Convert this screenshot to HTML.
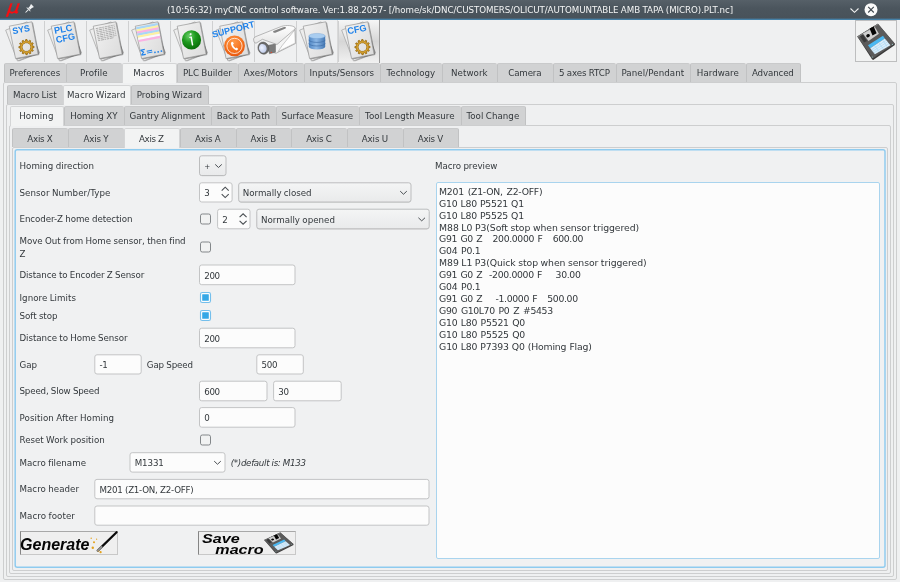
<!DOCTYPE html>
<html>
<head>
<meta charset="utf-8">
<title>myCNC control software</title>
<style>
*{box-sizing:border-box;margin:0;padding:0}
html,body{width:900px;height:582px;overflow:hidden;background:#eff0f1}
body{position:relative;font-family:"DejaVu Sans","Liberation Sans",sans-serif;font-size:8.7px;color:#33383c;line-height:12px}
.abs{position:absolute}
#root{position:absolute;left:0;top:0;width:900px;height:582px;will-change:transform}
#title{position:absolute;left:0;top:0;width:900px;height:20px;background:linear-gradient(#566068,#4b555d 45%,#48525a);border-bottom:1px solid #4581a8;box-shadow:inset 0 -1px 0 rgba(74,140,185,.3);color:#f4f5f5}
#title .t{position:absolute;left:0;width:900px;top:3.5px;text-align:center;font-size:8.7px;line-height:12px;white-space:pre}
/* toolbar */
.tb{position:absolute;top:20px;height:43px;width:42px}
.sep{position:absolute;top:21px;height:41px;width:1px;background:#cfd0d1}
/* tabs */
.tab{position:absolute;height:19px;background:#d1d2d3;border:1px solid #c1c2c3;border-top-color:#c9cacb;border-right:none;border-bottom:none;padding-top:1px;border-radius:2px 2px 0 0;text-align:center;text-indent:-1.3px;line-height:17.5px;white-space:nowrap;overflow:hidden}
.tab.sel{background:#f2f3f3;border-color:#d4d5d6;border-right:1px solid #d4d5d6;height:20px;z-index:3}
.tab.last{border-right:1px solid #c1c2c3}
.pane{position:absolute;border:1px solid #cdcecf;border-radius:2px;background:#eff0f1}
.lbl{position:absolute;white-space:nowrap;line-height:12px}
.inp{position:absolute;background:#fcfcfc;border:1px solid #c5c6c7;border-radius:2.5px;line-height:12px;white-space:pre}
.inp span{position:absolute;left:4.2px;top:50%;margin-top:-5.2px}
.cmb{position:absolute;background:linear-gradient(#f3f4f4,#eaebec);border:1px solid #bfc0c1;border-radius:2.5px;box-shadow:0 1px 0 rgba(0,0,0,.08)}
.cmb span{position:absolute;left:3.6px;top:50%;margin-top:-5.2px;white-space:pre}
.chk{position:absolute;width:11px;height:11px;border:1px solid #83878a;border-radius:2px;background:#f1f2f2}
.chk.on{border-color:#79c1ec;background:#fbfcfd;box-shadow:0 0 0 .4px rgba(121,193,236,.5)}
.chk.on:after{content:"";position:absolute;left:1.2px;top:1.2px;width:6.6px;height:6.6px;background:#35a7e6;border-radius:.5px}
svg{position:absolute;overflow:visible}
i{font-style:inherit}
.pbtn{position:absolute;background:#efefef;border:1px solid #c8c8c8;border-left:1px solid #858585;border-top-color:#a8a8a8}
.bi{font-family:'Liberation Sans',sans-serif;font-weight:bold;font-style:italic;color:#050505;white-space:nowrap}
.frame{position:absolute;border:1px solid #8fcbee;border-radius:2px;box-shadow:0 0 0 .5px rgba(143,203,238,.45)}
.ta{position:absolute;background:#fcfcfc;border:1px solid #a9d4ee;border-radius:2px}
.ta pre{position:absolute;left:2.6px;top:3.3px;font-family:inherit;font-size:9.3px;line-height:11.92px;white-space:pre}
</style>
</head>
<body>
<div id="root">
<div id="title"><div class="t"><i style="letter-spacing:-0.067px;word-spacing:-0.261px">(10:56:32) myCNC control software. Ver:1.88.2057- [/home/sk/DNC/CUSTOMERS/OLICUT/AUTOMUNTABLE AMB TAPA (MICRO).PLT.nc]</i></div>
<div class="abs" style="left:5.6px;top:-4.9px;font-family:'DejaVu Sans','Liberation Sans',sans-serif;font-style:italic;font-size:17.6px;line-height:24px;color:#fb0d10;transform:scaleX(1.12) skewX(-6deg);transform-origin:0 100%;-webkit-text-stroke:.35px #fb0d10">μ</div>
<svg style="left:24.3px;top:5.4px" width="9" height="9" viewBox="0 0 10 10"><g transform="rotate(45 5 5)" fill="#f1f3f4"><rect x="2.9" y="-1.3" width="4.2" height="1.7" rx=".3"/><rect x="3.5" y="0" width="3" height="3.6"/><path d="M1.6 5.3 Q5 2.2 8.4 5.3 Z"/><rect x="4.5" y="5.1" width="1" height="4.6"/></g></svg>
<svg style="left:849.5px;top:7.5px" width="9" height="5" viewBox="0 0 9 5"><path d="M.5 .5 L4.5 4.3 L8.5 .5" fill="none" stroke="#f2f3f3" stroke-width="1.05"/></svg>
<svg style="left:863.5px;top:3px" width="14" height="14" viewBox="0 0 14 14"><circle cx="7" cy="6.7" r="6.5" fill="#fafafa"/><path d="M4.2 3.9 L9.8 9.5 M9.8 3.9 L4.2 9.5" stroke="#40484f" stroke-width="1.1" fill="none"/></svg>
</div>
<div class="abs" style="left:337px;top:20px;width:42.5px;height:43px;background:linear-gradient(#f6f6f6,#d6d6d6 50%,#f1f1f1);border-left:1px solid #d9d9d9;border-right:1px solid #9a9a9a"></div>
<div class="sep" style="left:43.9px"></div>
<div class="sep" style="left:85.9px"></div>
<div class="sep" style="left:127.9px"></div>
<div class="sep" style="left:169.9px"></div>
<div class="sep" style="left:211.9px"></div>
<div class="sep" style="left:253.9px"></div>
<div class="sep" style="left:295.9px"></div>
<div class="sep" style="left:337.9px"></div>
<svg style="left:2.4px;top:20px" width="42" height="43" viewBox="0 0 42 43"><defs><linearGradient id="pg0" x1="0" y1="0" x2="1" y2="1"><stop offset="0" stop-color="#f1f1f1"/><stop offset="1" stop-color="#dcdcdc"/></linearGradient></defs>
<g transform="translate(20.3 21.4) rotate(-21)"><rect x="-10.6" y="-15.6" width="23" height="33" fill="#000" opacity=".28"/><rect x="-11.5" y="-16.5" width="23" height="33" fill="#ededed" stroke="#9b9b9b" stroke-width=".6"/></g>
<g transform="translate(21.7 20.2) rotate(-11)"><rect x="-10.5" y="-15.5" width="23" height="33" fill="#000" opacity=".32"/><rect x="-11.5" y="-16.5" width="23" height="33" fill="url(#pg0)" stroke="#8f8f8f" stroke-width=".6"/><text x="-0.6" y="-8.0" text-anchor="middle" font-family="Liberation Sans,sans-serif" font-weight="bold" font-size="8.9" fill="#1f82ea" >SYS</text><path d="M7.40 7.30 L8.97 8.02 L8.74 9.27 L7.02 9.39 L6.60 10.30 L7.59 11.70 L6.77 12.67 L5.22 11.92 L4.40 12.50 L4.56 14.21 L3.37 14.64 L2.40 13.22 L1.40 13.30 L0.68 14.87 L-0.57 14.64 L-0.69 12.92 L-1.60 12.50 L-3.00 13.49 L-3.97 12.67 L-3.22 11.12 L-3.80 10.30 L-5.51 10.46 L-5.94 9.27 L-4.52 8.30 L-4.60 7.30 L-6.17 6.58 L-5.94 5.33 L-4.22 5.21 L-3.80 4.30 L-4.79 2.90 L-3.97 1.93 L-2.42 2.68 L-1.60 2.10 L-1.76 0.39 L-0.57 -0.04 L0.40 1.38 L1.40 1.30 L2.12 -0.27 L3.37 -0.04 L3.49 1.68 L4.40 2.10 L5.80 1.11 L6.77 1.93 L6.02 3.48 L6.60 4.30 L8.31 4.14 L8.74 5.33 L7.32 6.30 Z M5.80 7.30 A4.4 4.4 0 1 0 -3.00 7.30 A4.4 4.4 0 1 0 5.80 7.30 Z" fill="#c8921f" fill-rule="evenodd" stroke="#94660f" stroke-width="0.7" stroke-linejoin="round"/><circle cx="1.4" cy="7.3" r="5.20" fill="none" stroke="#e0ae3a" stroke-width="0.9" opacity=".8"/></g></svg>
<svg style="left:44.4px;top:20px" width="42" height="43" viewBox="0 0 42 43"><defs><linearGradient id="pg1" x1="0" y1="0" x2="1" y2="1"><stop offset="0" stop-color="#f1f1f1"/><stop offset="1" stop-color="#dcdcdc"/></linearGradient></defs>
<g transform="translate(20.3 21.4) rotate(-21)"><rect x="-10.6" y="-15.6" width="23" height="33" fill="#000" opacity=".28"/><rect x="-11.5" y="-16.5" width="23" height="33" fill="#ededed" stroke="#9b9b9b" stroke-width=".6"/></g>
<g transform="translate(21.7 20.2) rotate(-11)"><rect x="-10.5" y="-15.5" width="23" height="33" fill="#000" opacity=".32"/><rect x="-11.5" y="-16.5" width="23" height="33" fill="url(#pg1)" stroke="#8f8f8f" stroke-width=".6"/><text x="-0.3" y="-8.3" text-anchor="middle" font-family="Liberation Sans,sans-serif" font-weight="bold" font-size="9.2" fill="#1f82ea" >PLC</text><text x="0.2" y="0.9" text-anchor="middle" font-family="Liberation Sans,sans-serif" font-weight="bold" font-size="9.2" fill="#1f82ea" >CFG</text></g></svg>
<svg style="left:86.4px;top:20px" width="42" height="43" viewBox="0 0 42 43"><defs><linearGradient id="pg2" x1="0" y1="0" x2="1" y2="1"><stop offset="0" stop-color="#f1f1f1"/><stop offset="1" stop-color="#dcdcdc"/></linearGradient></defs>
<g transform="translate(20.3 21.4) rotate(-21)"><rect x="-10.6" y="-15.6" width="23" height="33" fill="#000" opacity=".28"/><rect x="-11.5" y="-16.5" width="23" height="33" fill="#ededed" stroke="#9b9b9b" stroke-width=".6"/></g>
<g transform="translate(21.7 20.2) rotate(-11)"><rect x="-10.5" y="-15.5" width="23" height="33" fill="#000" opacity=".32"/><rect x="-11.5" y="-16.5" width="23" height="33" fill="url(#pg2)" stroke="#8f8f8f" stroke-width=".6"/><line x1="-9.5" y1="-13.60" x2="9.5" y2="-13.60" stroke="#a2a2a2" stroke-width=".8" stroke-dasharray="2.2 .7 3.1 .6 1.6 .8"/><line x1="-9.5" y1="-11.85" x2="9.5" y2="-11.85" stroke="#a2a2a2" stroke-width=".8" stroke-dasharray="2.2 .7 3.1 .6 1.6 .8"/><line x1="-9.5" y1="-10.10" x2="9.5" y2="-10.10" stroke="#a2a2a2" stroke-width=".8" stroke-dasharray="2.2 .7 3.1 .6 1.6 .8"/><line x1="-9.5" y1="-8.35" x2="9.5" y2="-8.35" stroke="#a2a2a2" stroke-width=".8" stroke-dasharray="2.2 .7 3.1 .6 1.6 .8"/><line x1="-9.5" y1="-6.60" x2="9.5" y2="-6.60" stroke="#a2a2a2" stroke-width=".8" stroke-dasharray="2.2 .7 3.1 .6 1.6 .8"/><line x1="-9.5" y1="-4.85" x2="9.5" y2="-4.85" stroke="#a2a2a2" stroke-width=".8" stroke-dasharray="2.2 .7 3.1 .6 1.6 .8"/><line x1="-9.5" y1="-3.10" x2="9.5" y2="-3.10" stroke="#a2a2a2" stroke-width=".8" stroke-dasharray="2.2 .7 3.1 .6 1.6 .8"/><line x1="-9.5" y1="-1.35" x2="6.5" y2="-1.35" stroke="#a2a2a2" stroke-width=".8" stroke-dasharray="2.2 .7 3.1 .6 1.6 .8"/></g></svg>
<svg style="left:128.4px;top:20px" width="42" height="43" viewBox="0 0 42 43"><defs><linearGradient id="pg3" x1="0" y1="0" x2="1" y2="1"><stop offset="0" stop-color="#f1f1f1"/><stop offset="1" stop-color="#dcdcdc"/></linearGradient></defs>
<g transform="translate(20.3 21.4) rotate(-21)"><rect x="-10.6" y="-15.6" width="23" height="33" fill="#000" opacity=".28"/><rect x="-11.5" y="-16.5" width="23" height="33" fill="#ededed" stroke="#9b9b9b" stroke-width=".6"/></g>
<g transform="translate(21.7 20.2) rotate(-11)"><rect x="-10.5" y="-15.5" width="23" height="33" fill="#000" opacity=".32"/><rect x="-11.5" y="-16.5" width="23" height="33" fill="url(#pg3)" stroke="#8f8f8f" stroke-width=".6"/><rect x="-11" y="-15.30" width="22" height="2.2" fill="#a9d6f7"/><rect x="-11" y="-13.15" width="22" height="2.2" fill="#fdf1a3"/><rect x="-11" y="-11.00" width="22" height="2.2" fill="#f9b3e3"/><rect x="-11" y="-8.85" width="22" height="2.2" fill="#a9d6f7"/><rect x="-11" y="-6.70" width="22" height="2.2" fill="#fdf1a3"/><rect x="-11" y="-4.55" width="22" height="2.2" fill="#fafafa"/><rect x="-11" y="-2.40" width="22" height="2.2" fill="#f9b3e3"/><text x="-0.4" y="13.9" text-anchor="middle" font-family="DejaVu Sans,sans-serif" font-weight="bold" font-size="8.6" fill="#1f82ea">Σ=...</text></g></svg>
<svg style="left:170.4px;top:20px" width="42" height="43" viewBox="0 0 42 43"><defs><linearGradient id="pg4" x1="0" y1="0" x2="1" y2="1"><stop offset="0" stop-color="#f1f1f1"/><stop offset="1" stop-color="#dcdcdc"/></linearGradient></defs>
<g transform="translate(20.3 21.4) rotate(-21)"><rect x="-10.6" y="-15.6" width="23" height="33" fill="#000" opacity=".28"/><rect x="-11.5" y="-16.5" width="23" height="33" fill="#ededed" stroke="#9b9b9b" stroke-width=".6"/></g>
<g transform="translate(21.7 20.2) rotate(-11)"><rect x="-10.5" y="-15.5" width="23" height="33" fill="#000" opacity=".32"/><rect x="-11.5" y="-16.5" width="23" height="33" fill="url(#pg4)" stroke="#8f8f8f" stroke-width=".6"/></g><defs><radialGradient id="gi" cx=".38" cy=".3" r=".75"><stop offset="0" stop-color="#6bd06b"/><stop offset=".45" stop-color="#1f9a1f"/><stop offset="1" stop-color="#066a06"/></radialGradient></defs>
<circle cx="21.5" cy="19.9" r="9.6" fill="url(#gi)"/>
<g transform="translate(.4 .3) rotate(-10 21.1 19.6)"><rect x="20.5" y="16.3" width="1.5" height="9" rx=".6" fill="#fff"/><rect x="19.4" y="16.3" width="2" height="1" fill="#fff"/><circle cx="21.2" cy="13.8" r="1.05" fill="#fff" opacity=".9"/></g></svg>
<svg style="left:212.4px;top:20px" width="42" height="43" viewBox="0 0 42 43"><defs><linearGradient id="pg5" x1="0" y1="0" x2="1" y2="1"><stop offset="0" stop-color="#f1f1f1"/><stop offset="1" stop-color="#dcdcdc"/></linearGradient></defs>
<g transform="translate(20.8 21.4) rotate(-21)"><rect x="-10.6" y="-15.6" width="23" height="33" fill="#000" opacity=".28"/><rect x="-11.5" y="-16.5" width="23" height="33" fill="#ededed" stroke="#9b9b9b" stroke-width=".6"/></g>
<g transform="translate(22.2 20.2) rotate(-11)"><rect x="-10.5" y="-15.5" width="23" height="33" fill="#000" opacity=".32"/><rect x="-11.5" y="-16.5" width="23" height="33" fill="url(#pg5)" stroke="#8f8f8f" stroke-width=".6"/></g><defs><radialGradient id="go" cx=".45" cy=".3" r=".8"><stop offset="0" stop-color="#ff9a4a"/><stop offset=".55" stop-color="#f5711c"/><stop offset="1" stop-color="#e24e0c"/></radialGradient></defs>
<circle cx="22.5" cy="25.9" r="10.4" fill="url(#go)"/>
<circle cx="22.5" cy="25.9" r="7.6" fill="none" stroke="#fff" stroke-width=".8" opacity=".95"/>
<path transform="translate(.4 .3)" d="M18.6 22.2 C18.2 24.6 20.3 28.9 24.3 30.1 L25.9 28.6 L24.3 27.2 L23.3 27.9 C22.1 27.3 21 25.7 20.6 24.2 L21.5 23.4 L20.4 21.4 Z" fill="#fff"/><text x="21.3" y="12.6" text-anchor="middle" font-family="Liberation Sans,sans-serif" font-weight="bold" font-size="9" fill="#1f82ea" transform="rotate(-14.5 20.8 9.5)">SUPPORT</text></svg>
<svg style="left:254.4px;top:20px" width="42" height="43" viewBox="0 0 42 43"><defs><linearGradient id="cb" x1="0" y1="0" x2="0" y2="1"><stop offset="0" stop-color="#ffffff"/><stop offset="1" stop-color="#e4e4e4"/></linearGradient>
<radialGradient id="cl" cx=".4" cy=".4" r=".7"><stop offset="0" stop-color="#eef3ff"/><stop offset="1" stop-color="#b9c6e6"/></radialGradient></defs>
<path d="M28 13 L41 8 L41.6 23.5 L22 33.3 L15 31 Z" fill="#f4f4f4" stroke="#8d8d8d" stroke-width=".6" stroke-linejoin="round"/>
<path d="M28.2 25.5 L40.7 10 L41.3 23 L24 31.6 Z" fill="#fdfdfd" stroke="#9a9a9a" stroke-width=".5" stroke-linejoin="round"/>
<path d="M13 25.5 L21.5 24 L21.5 32.2 L15.5 33.8 Z" fill="#7b7b7b" stroke="#5a5a5a" stroke-width=".4"/>
<path d="M-0.3 20.3 C-0.8 18.4 0.2 17.3 2 16.5 L27.5 6.4 C32.5 4.9 38.8 5.4 40.9 7.4 L41.2 8.8 L23 24.5 L8.4 19.3 L2.6 22.9 C1.2 23.6 0 22.4 -0.3 20.3 Z" fill="url(#cb)" stroke="#8d8d8d" stroke-width=".6" stroke-linejoin="round"/>
<path d="M19.4 11 L29.3 7.2 C31.3 6.6 32.6 7.2 31.6 8.4 L22 12.6 C20 13.2 18.4 12.2 19.4 11 Z" fill="#828282"/>
<ellipse cx="9.4" cy="28.1" rx="5.4" ry="6.1" fill="#6a6a6a" stroke="#4e4e4e" stroke-width=".5" transform="rotate(-18 9.4 28.1)"/>
<ellipse cx="8.8" cy="28.4" rx="3.8" ry="4.5" fill="url(#cl)" transform="rotate(-18 8.8 28.4)"/>
<circle cx="17.3" cy="32.4" r=".7" fill="#e0452a"/></svg>
<svg style="left:296.4px;top:20px" width="42" height="43" viewBox="0 0 42 43"><defs><linearGradient id="pg7" x1="0" y1="0" x2="1" y2="1"><stop offset="0" stop-color="#f1f1f1"/><stop offset="1" stop-color="#dcdcdc"/></linearGradient></defs>
<g transform="translate(20.3 21.4) rotate(-21)"><rect x="-10.6" y="-15.6" width="23" height="33" fill="#000" opacity=".28"/><rect x="-11.5" y="-16.5" width="23" height="33" fill="#ededed" stroke="#9b9b9b" stroke-width=".6"/></g>
<g transform="translate(21.7 20.2) rotate(-11)"><rect x="-10.5" y="-15.5" width="23" height="33" fill="#000" opacity=".32"/><rect x="-11.5" y="-16.5" width="23" height="33" fill="url(#pg7)" stroke="#8f8f8f" stroke-width=".6"/></g><defs><linearGradient id="db" x1="0" y1="0" x2="1" y2="0"><stop offset="0" stop-color="#4f86c4"/><stop offset=".45" stop-color="#8db8e6"/><stop offset="1" stop-color="#4377b3"/></linearGradient></defs>
<g transform="translate(0 -.8)"><path d="M12.8 16.8 L12.8 27.6 A8.2 2.6 0 0 0 29.2 27.6 L29.2 16.8 Z" fill="url(#db)"/>
<path d="M12.8 20.6 A8.2 2.6 0 0 0 29.2 20.6 M12.8 24.2 A8.2 2.6 0 0 0 29.2 24.2" fill="none" stroke="#3b6aa3" stroke-width=".8" opacity=".8"/>
<ellipse cx="21" cy="16.8" rx="8.2" ry="2.6" fill="#a9cdf0" stroke="#6f9fd4" stroke-width=".4"/></g></svg>
<svg style="left:337.9px;top:20px" width="42" height="43" viewBox="0 0 42 43"><defs><linearGradient id="pg8" x1="0" y1="0" x2="1" y2="1"><stop offset="0" stop-color="#f1f1f1"/><stop offset="1" stop-color="#dcdcdc"/></linearGradient></defs>
<g transform="translate(20.3 21.4) rotate(-21)"><rect x="-10.6" y="-15.6" width="23" height="33" fill="#000" opacity=".28"/><rect x="-11.5" y="-16.5" width="23" height="33" fill="#ededed" stroke="#9b9b9b" stroke-width=".6"/></g>
<g transform="translate(21.7 20.2) rotate(-11)"><rect x="-10.5" y="-15.5" width="23" height="33" fill="#000" opacity=".32"/><rect x="-11.5" y="-16.5" width="23" height="33" fill="url(#pg8)" stroke="#8f8f8f" stroke-width=".6"/><text x="-0.6" y="-8.1" text-anchor="middle" font-family="Liberation Sans,sans-serif" font-weight="bold" font-size="9.2" fill="#1f82ea" >CFG</text><path d="M7.40 7.30 L8.97 8.02 L8.74 9.27 L7.02 9.39 L6.60 10.30 L7.59 11.70 L6.77 12.67 L5.22 11.92 L4.40 12.50 L4.56 14.21 L3.37 14.64 L2.40 13.22 L1.40 13.30 L0.68 14.87 L-0.57 14.64 L-0.69 12.92 L-1.60 12.50 L-3.00 13.49 L-3.97 12.67 L-3.22 11.12 L-3.80 10.30 L-5.51 10.46 L-5.94 9.27 L-4.52 8.30 L-4.60 7.30 L-6.17 6.58 L-5.94 5.33 L-4.22 5.21 L-3.80 4.30 L-4.79 2.90 L-3.97 1.93 L-2.42 2.68 L-1.60 2.10 L-1.76 0.39 L-0.57 -0.04 L0.40 1.38 L1.40 1.30 L2.12 -0.27 L3.37 -0.04 L3.49 1.68 L4.40 2.10 L5.80 1.11 L6.77 1.93 L6.02 3.48 L6.60 4.30 L8.31 4.14 L8.74 5.33 L7.32 6.30 Z M5.80 7.30 A4.4 4.4 0 1 0 -3.00 7.30 A4.4 4.4 0 1 0 5.80 7.30 Z" fill="#c8921f" fill-rule="evenodd" stroke="#94660f" stroke-width="0.7" stroke-linejoin="round"/><circle cx="1.4" cy="7.3" r="5.20" fill="none" stroke="#e0ae3a" stroke-width="0.9" opacity=".8"/></g></svg>
<div class="abs" style="left:855px;top:20px;width:42px;height:41.5px;border:1px solid #bdbebf;background:#f1f2f2"></div>
<svg style="left:855px;top:20px" width="42" height="42" viewBox="0 0 42 42"><g transform="translate(0 0) scale(1 1)">
<path d="M2.3 16.6 L22.9 3.7 L39.7 23.5 L39.9 25 L18.2 40 L17 39.2 Z" fill="#3a3a3a"/>
<path d="M2.3 16.6 L22.9 3.7 L39.7 23.5 L17.8 38.5 Z" fill="#5b5b5b"/>
<path d="M2.3 16.6 L22.9 3.7 L23.6 4.5 L3.2 17.4 Z" fill="#7c7c7c"/>
<path d="M5 16.3 L8 14.5 L12 21 L9 22.4 Z" fill="#3a3a3a"/>
<path d="M7.9 13.6 L19.9 6.9 L23.9 13.8 L13.5 21 Z" fill="#cfcfcf"/>
<path d="M14.6 8.6 L18.7 6.6 L21.6 13.3 L17.5 15.5 Z" fill="#050505"/>
<ellipse cx="13.1" cy="15.7" rx="1.9" ry="1.6" fill="#050505" transform="rotate(-30 13.1 15.7)"/>
<path d="M13 25.3 L28 15.8 L29.8 18.6 L15.2 28.3 Z" fill="#4ab8f2"/>
<path d="M15.2 28.3 L29.8 18.6 L35.4 25.2 L19.9 34.3 Z" fill="#dbeefa"/>
<path d="M16.4 29.9 L31.2 20.3 M17.6 31.4 L32.6 21.9 M18.8 32.9 L34 23.6 M19.5 25.6 L24.2 31.8 M23.8 22.7 L28.5 29.2 M27.6 20.1 L32.4 26.9" stroke="#9fd0f0" stroke-width=".5" fill="none"/>
<circle cx="17.2" cy="37" r=".6" fill="#9cc"/><circle cx="37.4" cy="24.3" r=".6" fill="#9cc"/>
</g></svg>
<div class="pane" style="left:3px;top:82px;width:894px;height:498px"></div>
<div class="pane" style="left:6px;top:104px;width:888px;height:473px"></div>
<div class="pane" style="left:9px;top:125px;width:882px;height:449px"></div>
<div class="pane" style="left:12px;top:147px;width:876px;height:424px"></div>
<svg style="left:0;top:0" width="900" height="582" viewBox="0 0 900 582"><rect x="15.2" y="149.8" width="869.8" height="417.4" rx="2" fill="#f0f1f2" stroke="#8ecbef" stroke-width="1.45"/></svg>
<div class="tab" style="left:4px;top:63px;width:62px"><i style="letter-spacing:-0.041px">Preferences</i></div>
<div class="tab" style="left:66px;top:63px;width:56px"><i style="letter-spacing:0.074px">Profile</i></div>
<div class="tab sel" style="left:122px;top:63px;width:55px"><i style="letter-spacing:0.055px">Macros</i></div>
<div class="tab" style="left:177px;top:63px;width:61px"><i style="letter-spacing:-0.033px;word-spacing:-0.373px">PLC Builder</i></div>
<div class="tab" style="left:238px;top:63px;width:66px"><i style="letter-spacing:0.065px">Axes/Motors</i></div>
<div class="tab" style="left:304px;top:63px;width:76px"><i style="letter-spacing:0.028px">Inputs/Sensors</i></div>
<div class="tab" style="left:380px;top:63px;width:62px"><i style="letter-spacing:0.006px">Technology</i></div>
<div class="tab" style="left:442px;top:63px;width:55px"><i style="letter-spacing:0.045px">Network</i></div>
<div class="tab" style="left:497px;top:63px;width:56px"><i style="letter-spacing:-0.156px">Camera</i></div>
<div class="tab" style="left:553px;top:63px;width:63px"><i style="letter-spacing:-0.101px;word-spacing:-0.290px">5 axes RTCP</i></div>
<div class="tab" style="left:616px;top:63px;width:74px"><i style="letter-spacing:0.079px">Panel/Pendant</i></div>
<div class="tab" style="left:690px;top:63px;width:56px"><i style="letter-spacing:0.002px">Hardware</i></div>
<div class="tab last" style="left:746px;top:63px;width:55px"><i style="letter-spacing:-0.135px">Advanced</i></div>
<div class="tab" style="left:7px;top:85px;width:56px"><i style="letter-spacing:0.007px;word-spacing:-0.413px">Macro List</i></div>
<div class="tab sel" style="left:63px;top:85px;width:68px"><i style="letter-spacing:0.020px;word-spacing:-0.426px">Macro Wizard</i></div>
<div class="tab last" style="left:131px;top:85px;width:78px"><i style="letter-spacing:0.054px;word-spacing:-0.429px">Probing Wizard</i></div>
<div class="tab sel" style="left:10px;top:106px;width:54px"><i style="letter-spacing:0.094px">Homing</i></div>
<div class="tab" style="left:64px;top:106px;width:60px"><i style="letter-spacing:-0.029px;word-spacing:-0.346px">Homing XY</i></div>
<div class="tab" style="left:124px;top:106px;width:87px"><i style="letter-spacing:-0.061px;word-spacing:-0.329px">Gantry Alignment</i></div>
<div class="tab" style="left:211px;top:106px;width:65px"><i style="letter-spacing:-0.037px;word-spacing:-0.353px">Back to Path</i></div>
<div class="tab" style="left:276px;top:106px;width:83px"><i style="letter-spacing:-0.056px;word-spacing:-0.319px">Surface Measure</i></div>
<div class="tab" style="left:359px;top:106px;width:102px"><i style="letter-spacing:0.069px;word-spacing:-0.467px">Tool Length Measure</i></div>
<div class="tab last" style="left:461px;top:106px;width:65px"><i style="letter-spacing:0.045px;word-spacing:-0.452px">Tool Change</i></div>
<div class="tab" style="left:12px;top:128px;width:56px;padding-top:2px"><i style="letter-spacing:-0.266px;word-spacing:-0.125px">Axis X</i></div>
<div class="tab" style="left:68px;top:128px;width:56px;padding-top:2px"><i style="letter-spacing:-0.172px;word-spacing:-0.219px">Axis Y</i></div>
<div class="tab sel" style="left:124px;top:128px;width:56px;padding-top:2px"><i style="letter-spacing:-0.291px;word-spacing:-0.116px">Axis Z</i></div>
<div class="tab" style="left:180px;top:128px;width:56px;padding-top:2px"><i style="letter-spacing:-0.166px;word-spacing:-0.241px">Axis A</i></div>
<div class="tab" style="left:236px;top:128px;width:55px;padding-top:2px"><i style="letter-spacing:-0.147px;word-spacing:-0.259px">Axis B</i></div>
<div class="tab" style="left:291px;top:128px;width:56px;padding-top:2px"><i style="letter-spacing:-0.203px;word-spacing:-0.203px">Axis C</i></div>
<div class="tab" style="left:347px;top:128px;width:56px;padding-top:2px"><i style="letter-spacing:-0.081px;word-spacing:-0.325px">Axis U</i></div>
<div class="tab last" style="left:403px;top:128px;width:56px;padding-top:2px"><i style="letter-spacing:-0.237px;word-spacing:-0.153px">Axis V</i></div>
<svg style="left:0;top:0" width="900" height="582" viewBox="0 0 900 582"><defs><linearGradient id="cg" x1="0" y1="0" x2="0" y2="1"><stop offset="0" stop-color="#f4f5f5"/><stop offset="1" stop-color="#e9eaeb"/></linearGradient></defs><rect x="199.50" y="156.50" width="26.50" height="19.70" rx="2.4" fill="#000" opacity=".13"/><rect x="199.50" y="155.80" width="26.50" height="19.70" rx="2.2" fill="url(#cg)" stroke="#bcbdbe"/><path d="M215.20 164.40 L218.50 167.50 L221.80 164.40" fill="none" stroke="#4a4f53" stroke-width="1"/><rect x="199.50" y="182.80" width="32.60" height="19.20" rx="2.2" fill="#fcfcfc" stroke="#c3c4c5"/><path d="M221.70 190.60 L225.20 187.20 L228.70 190.60 M221.70 194.20 L225.20 197.60 L228.70 194.20" fill="none" stroke="#4a4f53" stroke-width="1.1"/><rect x="238.70" y="183.50" width="172.30" height="19.20" rx="2.4" fill="#000" opacity=".13"/><rect x="238.70" y="182.80" width="172.30" height="19.20" rx="2.2" fill="url(#cg)" stroke="#bcbdbe"/><path d="M400.20 191.15 L403.50 194.25 L406.80 191.15" fill="none" stroke="#4a4f53" stroke-width="1"/><rect x="200.50" y="214.00" width="10" height="10" rx="1.8" fill="#f1f2f2" stroke="#83878a"/><rect x="217.60" y="209.20" width="32.40" height="19.60" rx="2.2" fill="#fcfcfc" stroke="#c3c4c5"/><path d="M239.60 217.20 L243.10 213.80 L246.60 217.20 M239.60 220.80 L243.10 224.20 L246.60 220.80" fill="none" stroke="#4a4f53" stroke-width="1.1"/><rect x="256.80" y="209.90" width="172.40" height="19.60" rx="2.4" fill="#000" opacity=".13"/><rect x="256.80" y="209.20" width="172.40" height="19.60" rx="2.2" fill="url(#cg)" stroke="#bcbdbe"/><path d="M418.40 217.75 L421.70 220.85 L425.00 217.75" fill="none" stroke="#4a4f53" stroke-width="1"/><rect x="200.50" y="242.00" width="10" height="10" rx="1.8" fill="#f1f2f2" stroke="#83878a"/><rect x="199.50" y="265.00" width="95.50" height="19.70" rx="2.2" fill="#fcfcfc" stroke="#c3c4c5"/><rect x="200.50" y="292.50" width="10" height="10" rx="1.8" fill="#fbfcfd" stroke="#74bfec" stroke-width="1.1"/><rect x="202.20" y="294.20" width="6.6" height="6.6" rx=".5" fill="#35a7e6"/><rect x="200.50" y="310.50" width="10" height="10" rx="1.8" fill="#fbfcfd" stroke="#74bfec" stroke-width="1.1"/><rect x="202.20" y="312.20" width="6.6" height="6.6" rx=".5" fill="#35a7e6"/><rect x="199.50" y="328.20" width="95.50" height="19.60" rx="2.2" fill="#fcfcfc" stroke="#c3c4c5"/><rect x="94.80" y="354.80" width="46.40" height="19.20" rx="2.2" fill="#fcfcfc" stroke="#c3c4c5"/><rect x="256.80" y="354.80" width="46.50" height="19.20" rx="2.2" fill="#fcfcfc" stroke="#c3c4c5"/><rect x="199.50" y="381.20" width="67.50" height="19.60" rx="2.2" fill="#fcfcfc" stroke="#c3c4c5"/><rect x="273.60" y="381.20" width="67.60" height="19.60" rx="2.2" fill="#fcfcfc" stroke="#c3c4c5"/><rect x="199.50" y="407.60" width="95.50" height="19.60" rx="2.2" fill="#fcfcfc" stroke="#c3c4c5"/><rect x="200.50" y="435.00" width="10" height="10" rx="1.8" fill="#f1f2f2" stroke="#83878a"/><rect x="130.00" y="452.70" width="95.00" height="19.40" rx="2.2" fill="#fcfcfc" stroke="#c3c4c5"/><path d="M214.20 461.15 L217.50 464.25 L220.80 461.15" fill="none" stroke="#4a4f53" stroke-width="1"/><rect x="94.80" y="479.40" width="334.20" height="19.40" rx="2.2" fill="#fcfcfc" stroke="#c3c4c5"/><rect x="94.80" y="506.00" width="334.20" height="19.20" rx="2.2" fill="#fcfcfc" stroke="#c3c4c5"/></svg>
<div class="lbl" style="left:19.5px;top:160.3px;"><i style="letter-spacing:0.016px;word-spacing:-0.391px">Homing direction</i></div>
<div class="lbl" style="left:204.2px;top:160.5px;font-size:7.2px">+</div>
<div class="lbl" style="left:19.5px;top:186.5px;"><i style="letter-spacing:0.054px;word-spacing:-0.445px">Sensor Number/Type</i></div>
<div class="lbl" style="left:204.2px;top:187.2px;"><i style="letter-spacing:-0.328px">3</i></div>
<div class="lbl" style="left:242.8px;top:187.2px;"><i style="letter-spacing:-0.035px;word-spacing:-0.356px">Normally closed</i></div>
<div class="lbl" style="left:19.5px;top:213.3px;"><i style="letter-spacing:-0.071px;word-spacing:-0.320px">Encoder-Z home detection</i></div>
<div class="lbl" style="left:222.3px;top:213.8px;"><i style="letter-spacing:-0.328px">2</i></div>
<div class="lbl" style="left:260.9px;top:213.8px;"><i style="letter-spacing:0.010px;word-spacing:-0.401px">Normally opened</i></div>
<div class="lbl" style="left:19.5px;top:235.3px;"><i style="letter-spacing:-0.027px;word-spacing:-0.369px">Move Out from Home sensor, then find</i></div>
<div class="lbl" style="left:19.5px;top:247.8px;"><i style="letter-spacing:-0.750px">Z</i></div>
<div class="lbl" style="left:19.5px;top:269.3px;"><i style="letter-spacing:-0.115px;word-spacing:-0.279px">Distance to Encoder Z Sensor</i></div>
<div class="lbl" style="left:204.2px;top:269.7px;"><i style="letter-spacing:-0.328px">200</i></div>
<div class="lbl" style="left:19.5px;top:291.5px;"><i style="letter-spacing:0.035px;word-spacing:-0.441px">Ignore Limits</i></div>
<div class="lbl" style="left:19.5px;top:309.7px;"><i style="letter-spacing:-0.033px;word-spacing:-0.357px">Soft stop</i></div>
<div class="lbl" style="left:19.5px;top:332.3px;"><i style="letter-spacing:-0.065px;word-spacing:-0.331px">Distance to Home Sensor</i></div>
<div class="lbl" style="left:204.2px;top:332.8px;"><i style="letter-spacing:-0.328px">200</i></div>
<div class="lbl" style="left:19.5px;top:358.5px;"><i style="letter-spacing:-0.083px">Gap</i></div>
<div class="lbl" style="left:99.5px;top:359.2px;"><i style="letter-spacing:-0.266px">-1</i></div>
<div class="lbl" style="left:146.8px;top:358.5px;"><i style="letter-spacing:-0.131px;word-spacing:-0.275px">Gap Speed</i></div>
<div class="lbl" style="left:261.5px;top:359.2px;"><i style="letter-spacing:-0.328px">500</i></div>
<div class="lbl" style="left:19.5px;top:385.1px;"><i style="letter-spacing:-0.164px;word-spacing:-0.243px">Speed, Slow Speed</i></div>
<div class="lbl" style="left:204.2px;top:385.8px;"><i style="letter-spacing:-0.328px">600</i></div>
<div class="lbl" style="left:278.3px;top:385.8px;"><i style="letter-spacing:-0.328px">30</i></div>
<div class="lbl" style="left:19.5px;top:411.5px;"><i style="letter-spacing:0.076px;word-spacing:-0.482px">Position After Homing</i></div>
<div class="lbl" style="left:204.2px;top:412.2px;"><i style="letter-spacing:-0.328px">0</i></div>
<div class="lbl" style="left:19.5px;top:434.2px;"><i style="letter-spacing:-0.011px;word-spacing:-0.387px">Reset Work position</i></div>
<div class="lbl" style="left:19.5px;top:456.6px;"><i style="letter-spacing:-0.006px;word-spacing:-0.369px">Macro filename</i></div>
<div class="lbl" style="left:134.7px;top:457.2px;"><i style="letter-spacing:-0.109px">M1331</i></div>
<div class="lbl" style="left:230.8px;top:456.6px;font-style:italic"><i style="letter-spacing:-0.328px;word-spacing:-0.070px">(*)default is: M133</i></div>
<div class="lbl" style="left:19.5px;top:483.3px;"><i style="letter-spacing:0.020px;word-spacing:-0.426px">Macro header</i></div>
<div class="lbl" style="left:99.5px;top:483.9px;"><i style="letter-spacing:-0.241px;word-spacing:-0.157px">M201 (Z1-ON, Z2-OFF)</i></div>
<div class="lbl" style="left:19.5px;top:509.7px;"><i style="letter-spacing:0.071px;word-spacing:-0.462px">Macro footer</i></div>
<div class="pbtn" style="left:19.5px;top:531px;width:98px;height:24px"></div>
<div class="abs bi" style="left:20.1px;top:535.7px;font-size:16px;line-height:18px">Generate</div>
<svg style="left:88px;top:531px" width="30" height="24" viewBox="0 0 30 24"><path d="M9.8 19.6 L28.6 1.2" stroke="#0a0a0a" stroke-width="2.2" stroke-linecap="round"/><path d="M9.8 19.6 L13.4 16.1" stroke="#8d8d8d" stroke-width="2.3" stroke-linecap="round"/><g fill="#e3a11a"><circle cx="3.2" cy="7.2" r=".7"/><circle cx="8.6" cy="8.2" r=".6"/><circle cx="6" cy="11.3" r="1"/><circle cx="4.8" cy="16.8" r="1.2"/><circle cx="12.6" cy="21.2" r="1.1"/><circle cx="10.3" cy="20" r=".6"/></g></svg>
<div class="pbtn" style="left:198.3px;top:531px;width:98px;height:24px"></div>
<div class="abs bi" style="left:202px;top:534.3px;font-size:12.6px;line-height:10.3px;transform:scaleX(1.28);transform-origin:0 0">Save<br><span style="padding-left:10.4px">macro</span></div>
<svg style="left:262.8px;top:532.3px" width="31" height="23" viewBox="0 0 31 23"><g transform="translate(-0.6 -1.6) scale(0.78 0.58)">
<path d="M2.3 16.6 L22.9 3.7 L39.7 23.5 L39.9 25 L18.2 40 L17 39.2 Z" fill="#3a3a3a"/>
<path d="M2.3 16.6 L22.9 3.7 L39.7 23.5 L17.8 38.5 Z" fill="#5b5b5b"/>
<path d="M2.3 16.6 L22.9 3.7 L23.6 4.5 L3.2 17.4 Z" fill="#7c7c7c"/>
<path d="M5 16.3 L8 14.5 L12 21 L9 22.4 Z" fill="#3a3a3a"/>
<path d="M7.9 13.6 L19.9 6.9 L23.9 13.8 L13.5 21 Z" fill="#cfcfcf"/>
<path d="M14.6 8.6 L18.7 6.6 L21.6 13.3 L17.5 15.5 Z" fill="#050505"/>
<ellipse cx="13.1" cy="15.7" rx="1.9" ry="1.6" fill="#050505" transform="rotate(-30 13.1 15.7)"/>
<path d="M13 25.3 L28 15.8 L29.8 18.6 L15.2 28.3 Z" fill="#4ab8f2"/>
<path d="M15.2 28.3 L29.8 18.6 L35.4 25.2 L19.9 34.3 Z" fill="#dbeefa"/>
<path d="M16.4 29.9 L31.2 20.3 M17.6 31.4 L32.6 21.9 M18.8 32.9 L34 23.6 M19.5 25.6 L24.2 31.8 M23.8 22.7 L28.5 29.2 M27.6 20.1 L32.4 26.9" stroke="#9fd0f0" stroke-width=".5" fill="none"/>
<circle cx="17.2" cy="37" r=".6" fill="#9cc"/><circle cx="37.4" cy="24.3" r=".6" fill="#9cc"/>
</g></svg>
<div class="lbl" style="left:435px;top:160px"><i style="letter-spacing:-0.048px;word-spacing:-0.358px">Macro preview</i></div>
<div class="ta" style="left:435.5px;top:181.5px;width:444.5px;height:377px"><pre><i style="letter-spacing:-0.266px;word-spacing:1.272px">M201 (Z1-ON, Z2-OFF)</i>
<i style="letter-spacing:-0.221px;word-spacing:0.306px">G10 L80 P5521 Q1</i>
<i style="letter-spacing:-0.221px;word-spacing:0.306px">G10 L80 P5525 Q1</i>
<i style="letter-spacing:-0.071px;word-spacing:-0.273px">M88 L0 P3(Soft stop when sensor triggered)</i>
<i style="letter-spacing:-0.353px;word-spacing:0.802px">G91 G0 Z   200.0000 F   600.00</i>
<i style="letter-spacing:-0.234px;word-spacing:0.884px">G04 P0.1</i>
<i style="letter-spacing:-0.071px;word-spacing:-0.338px">M89 L1 P3(Quick stop when sensor triggered)</i>
<i style="letter-spacing:-0.339px;word-spacing:0.754px">G91 G0 Z  -200.0000 F    30.00</i>
<i style="letter-spacing:-0.234px;word-spacing:0.884px">G04 P0.1</i>
<i style="letter-spacing:-0.338px;word-spacing:0.698px">G91 G0 Z    -1.0000 F   500.00</i>
<i style="letter-spacing:-0.370px;word-spacing:1.282px">G90 G10L70 P0 Z #5453</i>
<i style="letter-spacing:-0.221px;word-spacing:0.672px">G10 L80 P5521 Q0</i>
<i style="letter-spacing:-0.221px;word-spacing:0.672px">G10 L80 P5525 Q0</i>
<i style="letter-spacing:-0.172px;word-spacing:0.308px">G10 L80 P7393 Q0 (Homing Flag)</i></pre></div>
</div>
</body>
</html>
